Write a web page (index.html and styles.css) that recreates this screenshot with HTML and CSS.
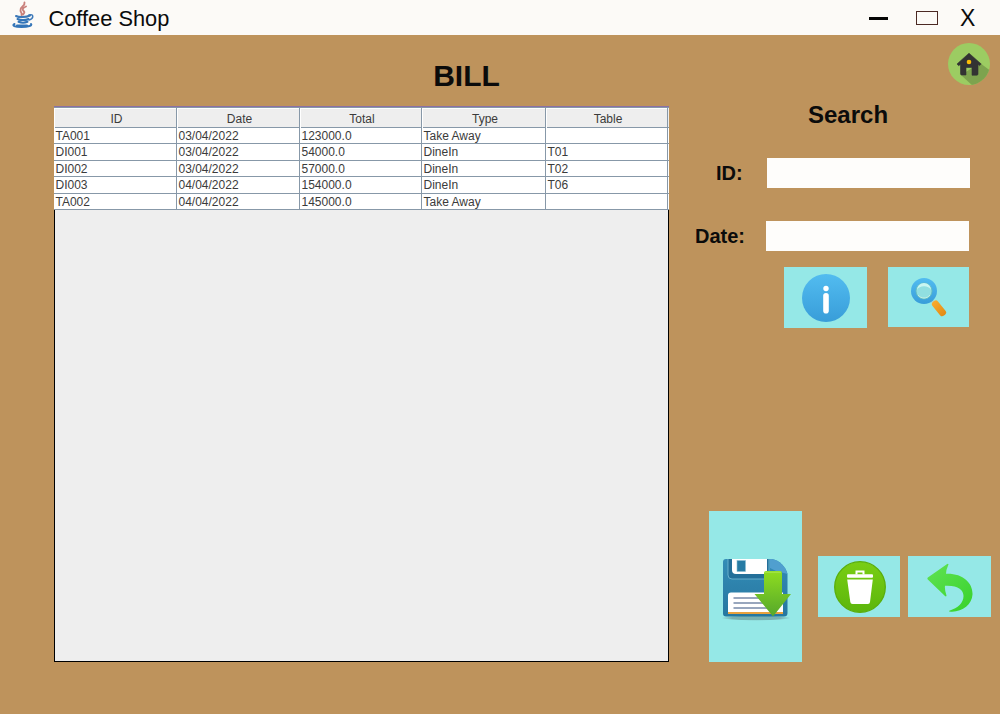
FILE: index.html
```html
<!DOCTYPE html>
<html lang="en">
<head>
<meta charset="utf-8">
<title>Coffee Shop</title>
<link rel="stylesheet" href="styles.css">
</head>
<body>
<header class="titlebar">
  <svg class="logo" width="24" height="30" viewBox="0 0 24 30">
    <g fill="none" stroke-linecap="round">
      <path d="M13.500 1.500c1 4-5 4-4 8 0 2 2 2.500 1 4.500M15 5.500c-4 2-4 3-2 5 1 1 0 2-1 3" stroke="#c9817c" stroke-width="1.900"/>
      <path d="M5 15c3 1.500 10 1.500 14-.5" stroke="#3c78b8" stroke-width="2"/>
      <path d="M18 14c5-1.500 5 3.500 0 5" stroke="#3c78b8" stroke-width="1.500"/>
      <path d="M6.500 18c3 1.200 8 1.200 11 0M7.500 20.800c3 1.200 6 1.200 9 0" stroke="#3475b8" stroke-width="2"/>
      <path d="M3.500 23c-3 1.500 0 3 7 3s11-1.500 9.500-3M6 24.500h10" stroke="#3475b8" stroke-width="2"/>
    </g>
  </svg>
  <span class="app-name">Coffee Shop</span>
  <nav class="controls">
    <span class="minimize"></span>
    <span class="maximize"></span>
    <span class="close">X</span>
  </nav>
</header>
<main class="content">
  <section class="bills">
    <h1 class="title">BILL</h1>
    <div class="panel">
      <div class="table">
        <div class="row head"><span>ID</span><span>Date</span><span>Total</span><span>Type</span><span>Table</span></div>
        <div class="row"><span>TA001</span><span>03/04/2022</span><span>123000.0</span><span>Take Away</span><span></span></div>
        <div class="row"><span>DI001</span><span>03/04/2022</span><span>54000.0</span><span>DineIn</span><span>T01</span></div>
        <div class="row"><span>DI002</span><span>03/04/2022</span><span>57000.0</span><span>DineIn</span><span>T02</span></div>
        <div class="row"><span>DI003</span><span>04/04/2022</span><span>154000.0</span><span>DineIn</span><span>T06</span></div>
        <div class="row"><span>TA002</span><span>04/04/2022</span><span>145000.0</span><span>Take Away</span><span></span></div>
      </div>
      <div class="blank"></div>
    </div>
  </section>
  <aside class="side">
    <svg class="home" width="42" height="42" viewBox="0 0 42 42">
      <defs><clipPath id="disc"><circle cx="21" cy="21" r="21"/></clipPath></defs>
      <circle cx="21" cy="21" r="21" fill="#9ccc62"/>
      <path clip-path="url(#disc)" d="M32 20l12 9v15H26L13 32z" fill="#7da34e"/>
      <path d="M21 10.200L33.200 21l-1.700 1.600-1.500-1.200V31q0 1.200-1.200 1.200H24V24.500h-6V32h-4.300q-1.200 0-1.200-1.200v-9.400L10.600 22.700 9 21z" fill="#333" stroke="#333" stroke-width=".6" stroke-linejoin="round"/>
      <circle cx="21" cy="19" r="2.300" fill="#fdbd06"/>
    </svg>
    <h2 class="search-title">Search</h2>
    <div class="field id-field"><label for="id">ID:</label><input id="id" type="text"></div>
    <div class="field date-field"><label for="date">Date:</label><input id="date" type="text"></div>
    <div class="search-actions">
      <button class="btn info" aria-label="Info">
        <svg width="48" height="48" viewBox="0 0 48 48">
          <defs><linearGradient id="blue" x2="0" y2="1"><stop stop-color="#52bcf0"/><stop offset="1" stop-color="#389dd9"/></linearGradient></defs>
          <circle cx="24" cy="24" r="24" fill="url(#blue)"/>
          <circle cx="24" cy="14.500" r="2.700" fill="#fff"/>
          <rect x="21.200" y="19" width="5.600" height="20.500" rx="2.800" fill="#fff"/>
        </svg>
      </button>
      <button class="btn find" aria-label="Search">
        <svg width="36" height="40" viewBox="0 0 36 40">
          <defs>
            <linearGradient id="orange" x2="0" y2="1"><stop stop-color="#faaa2d"/><stop offset="1" stop-color="#e28b15"/></linearGradient>
          </defs>
          <path d="M20 23l3 3" stroke="#a9d2cf" stroke-width="3"/>
          <rect x="-3.500" y="0" width="7" height="17.500" rx="2.800" transform="translate(22.500 24.500) rotate(-39)" fill="url(#orange)"/>
          <circle cx="13" cy="14" r="13" fill="url(#blue)"/>
          <circle cx="13" cy="14" r="8" fill="#91dfe0" stroke="#64bdbd" stroke-width=".8"/>
          <path d="M6 13a7 7 0 0 1 14 0c-2-5-12-5-14 0z" fill="#caf6f2"/>
          <path d="M7 18a7.500 7.500 0 0 0 12 0" fill="none" stroke="#c4eee3" stroke-width="1"/>
        </svg>
      </button>
    </div>
    <div class="bill-actions">
      <button class="btn save" aria-label="Save">
        <svg width="72" height="64" viewBox="0 0 72 64">
          <defs>
            <linearGradient id="disk" x2="0" y2="1"><stop stop-color="#338db7"/><stop offset=".6" stop-color="#2c7fa9"/><stop offset="1" stop-color="#2677a0"/></linearGradient>
            <linearGradient id="down" x2="0" y2="1"><stop stop-color="#8fdd20"/><stop offset="1" stop-color="#55a72b"/></linearGradient>
            <radialGradient id="shade"><stop offset=".7" stop-color="#6e9e9e" stop-opacity=".75"/><stop offset="1" stop-color="#6e9e9e" stop-opacity="0"/></radialGradient>
          </defs>
          <ellipse cx="35" cy="60" rx="35" ry="2.700" fill="url(#shade)"/>
          <path d="M5 1h46c7 1 14 8 15.500 15v39q0 3.500-3.500 3.500H5q-3 0-3-3V4q0-3 3-3z" fill="url(#disk)"/>
          <path d="M51 1c7 1 14 8 15.500 15L55 13 49 10V1z" fill="#509fcf"/>
          <path d="M7 1v16q0 4 4 4h37V1" fill="#236f99" stroke="#67afcc" stroke-width="1"/>
          <path d="M11 1h35v15H15q-4 0-4-4z" fill="#fff"/>
          <rect x="16" y="2.500" width="8.500" height="11" fill="#267ba4" stroke="#8abfd2" stroke-width=".6"/>
          <path d="M10 34.500h52V56H7V37.500q0-3 3-3z" fill="#fff"/>
          <path d="M7 54h55v2H7z" fill="#e9a13c"/>
          <path d="M12.500 40h38M12.500 45h38M12.500 50h38" stroke="#98a6bd" stroke-width="1.800"/>
          <path d="M45 13h14q2 0 2 2v21h9L52 58.500 33.500 36H43V15q0-2 2-2z" fill="url(#down)"/>
          <path d="M44 14.200h16" stroke="#a8e652" stroke-width="1"/>
        </svg>
      </button>
      <button class="btn trash" aria-label="Delete">
        <svg width="52" height="52" viewBox="0 0 52 52">
          <defs><linearGradient id="leaf" x2="0" y2="1"><stop stop-color="#79ce14"/><stop offset="1" stop-color="#5cb60c"/></linearGradient></defs>
          <circle cx="26" cy="26" r="25.300" fill="url(#leaf)" stroke="#5aae0c" stroke-width="1.300"/>
          <path d="M22.500 13.500V10.500h7v3" fill="none" stroke="#fff" stroke-width="2"/>
          <rect x="13" y="13.200" width="26" height="3.600" rx="1" fill="#fff"/>
          <path d="M13.200 18.500h25.600L36 41q-.2 2-2 2H18.500q-2 0-2.200-2z" fill="#fff"/>
        </svg>
      </button>
      <button class="btn back" aria-label="Back">
        <svg width="46" height="50" viewBox="0 0 46 50">
          <defs><linearGradient id="green" x2=".8" y2="1"><stop stop-color="#60e254"/><stop offset="1" stop-color="#3bd32e"/></linearGradient></defs>
          <path d="M21.500 1.200Q19 7 19 10.700C36 10 46 20 45.500 31.500C45 42 34 50 22.300 48.500Q21.800 48 22.300 47.700C31 45 36.500 40 36.500 33C36.500 27 31 22 18 22.700Q17.500 27 19.500 32.500Q19.300 34 18 33L.8 16.500Q-.2 15.200 1.200 14.200L20.200 1Q21.300 .3 21.500 1.200z" fill="url(#green)"/>
        </svg>
      </button>
    </div>
  </aside>
</main>
</body>
</html>
```

FILE: styles.css
```css
* { box-sizing: border-box; }
body {
  margin: 0;
  width: 1000px;
  height: 714px;
  overflow: hidden;
  background: #be935c;
  color: #0b0b0b;
  font-family: "Liberation Sans", Arial, sans-serif;
}
.titlebar {
  display: flex;
  align-items: center;
  height: 35px;
  padding: 0 25px 0 11px;
  background: #fcfaf7;
}
.logo { display: block; margin-top: -4px; }
.app-name { margin: 2px 0 0 13.5px; font-size: 21.8px; line-height: 30px; }
.controls { display: flex; align-items: center; margin-left: auto; }
.minimize { width: 19px; height: 3px; margin: 2px 28px 0 0; background: #050505; }
.maximize { width: 22px; height: 14px; margin-right: 22px; border: 1px solid #4b2924; outline: 0.5px solid #4b2924; outline-offset: -1px; }
.close { width: 15px; font-size: 23px; line-height: 30px; }
.content { display: grid; grid-template-columns: 669px 331px; height: 679px; }
.bills { padding-left: 54px; }
.title {
  margin: 23px 0 0;
  height: 48px;
  padding-left: 210px;
  text-align: center;
  font-size: 30px;
  line-height: 36px;
}
.panel { display: flex; flex-direction: column; height: 556px; }
.table {
  border-top: 1px solid #8a70a5;
  color: #3b3b3b;
  background: #fff;
  font-size: 12px;
}
.row {
  display: grid;
  grid-template-columns: 123px 123px 122px 124px 122px;
  height: 16.4px;
  line-height: 17px;
  border-bottom: 1px solid #8798a8;
}
.row span { padding-left: 1.5px; border-right: 1px solid #8798a8; white-space: nowrap; }
.row.head {
  height: 21px;
  line-height: 23px;
  background: #eee;
  text-align: center;
  border-top: 1px solid #8798a8;
}
.row.head span { padding-left: 3px; box-shadow: inset 1px 1px #fff; }
.blank { flex: 1; background: #eee; border: solid #000; border-width: 0 1px 1px; }
.side { display: flex; flex-direction: column; }
.home { display: block; margin: 8px 10px 0 auto; }
.search-title { margin: 15px 0 0 139px; font-size: 24px; line-height: 30px; }
.field { display: flex; align-items: center; height: 30px; font-size: 20px; font-weight: bold; }
.field input { width: 203px; height: 30px; margin: 0 0 0 auto; padding: 0; border: 0; background: #fefdfb; }
.id-field { margin: 28px 30px 0 47px; }
.date-field { margin: 33px 31px 0 26px; }
.search-actions { display: flex; gap: 21px; height: 61px; margin: 16px 31px 0 115px; }
.btn { display: flex; align-items: center; justify-content: center; margin: 0; padding: 0; border: 0; background: #95e8e7; }
.info { width: 83px; height: 61px; padding: 1px 0 0 1px; }
.find { width: 81px; height: 60px; }
.bill-actions { display: flex; height: 151px; margin: 183px 9px 0 40px; }
.save { width: 93px; height: 151px; padding: 7px 0 0 3px; }
.trash { width: 82px; height: 61px; margin: 45px 8px 0 16px; padding-left: 2px; }
.back { width: 83px; height: 61px; margin-top: 45px; padding-top: 2px; }
```
